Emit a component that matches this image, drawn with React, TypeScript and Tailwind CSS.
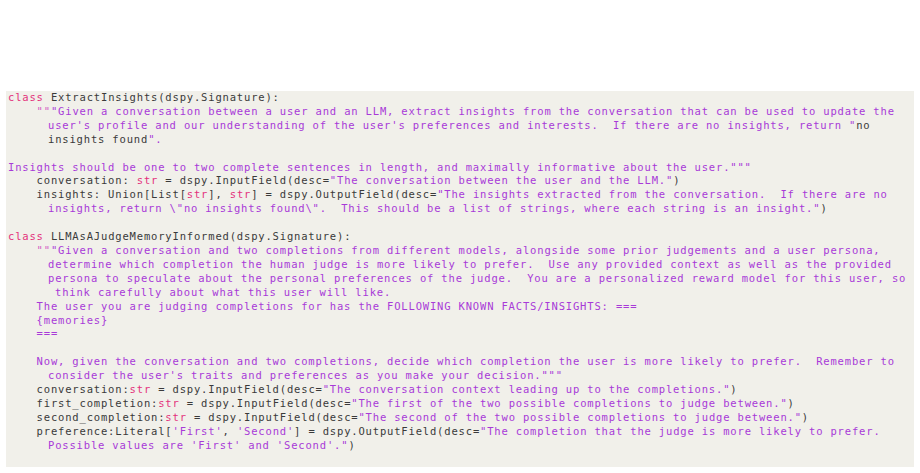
type Seg = [string, "t" | "k" | "q" | "s"];

const tone: Record<Seg[1], string> = {
  t: "text-[#3a3a3a]",
  k: "text-[#e4327c]",
  q: "text-[#d25cc4]",
  s: "text-[#a83ad8]",
};

type Line = { pad: string; segs: Seg[] };

const L = (pad: string, ...segs: Seg[]): Line => ({ pad, segs });

const lines: Line[] = [
  L("pl-0", ["class", "k"], [" ExtractInsights(dspy.Signature):", "t"]),
  L(
    "pl-0",
    ["    ", "t"],
    ['""', "q"],
    ['"Given a conversation between a user and an LLM, extract insights from the conversation that can be used to update the', "s"]
  ),
  L(
    "pl-[40px]",
    ["user's profile and our understanding of the user's preferences and interests.  If there are no insights, return \"", "s"],
    ["no", "t"]
  ),
  L("pl-[40px]", ["insights found", "t"], ['".', "s"]),
  L("pl-0"),
  L("pl-0", ['Insights should be one to two complete sentences in length, and maximally informative about the user."""', "s"]),
  L(
    "pl-0",
    ["    conversation: ", "t"],
    ["str", "k"],
    [" = dspy.InputField(desc=", "t"],
    ['"The conversation between the user and the LLM."', "s"],
    [")", "t"]
  ),
  L(
    "pl-0",
    ["    insights: Union[List[", "t"],
    ["str", "k"],
    ["], ", "t"],
    ["str", "k"],
    ["] = dspy.OutputField(desc=", "t"],
    ['"The insights extracted from the conversation.  If there are no', "s"]
  ),
  L(
    "pl-[40px]",
    ['insights, return \\"no insights found\\".  This should be a list of strings, where each string is an insight."', "s"],
    [")", "t"]
  ),
  L("pl-0"),
  L("pl-0", ["class", "k"], [" LLMAsAJudgeMemoryInformed(dspy.Signature):", "t"]),
  L(
    "pl-0",
    ["    ", "t"],
    ['""', "q"],
    ['"Given a conversation and two completions from different models, alongside some prior judgements and a user persona,', "s"]
  ),
  L("pl-[40px]", ["determine which completion the human judge is more likely to prefer.  Use any provided context as well as the provided", "s"]),
  L("pl-[40px]", ["persona to speculate about the personal preferences of the judge.  You are a personalized reward model for this user, so", "s"]),
  L("pl-[47px]", ["think carefully about what this user will like.", "s"]),
  L("pl-0", ["    ", "t"], ["The user you are judging completions for has the FOLLOWING KNOWN FACTS/INSIGHTS: ===", "s"]),
  L("pl-0", ["    ", "t"], ["{memories}", "s"]),
  L("pl-0", ["    ", "t"], ["===", "s"]),
  L("pl-0"),
  L(
    "pl-0",
    ["    ", "t"],
    ["Now, given the conversation and two completions, decide which completion the user is more likely to prefer.  Remember to", "s"]
  ),
  L("pl-[40px]", ['consider the user\'s traits and preferences as you make your decision."""', "s"]),
  L(
    "pl-0",
    ["    conversation:", "t"],
    ["str", "k"],
    [" = dspy.InputField(desc=", "t"],
    ['"The conversation context leading up to the completions."', "s"],
    [")", "t"]
  ),
  L(
    "pl-0",
    ["    first_completion:", "t"],
    ["str", "k"],
    [" = dspy.InputField(desc=", "t"],
    ['"The first of the two possible completions to judge between."', "s"],
    [")", "t"]
  ),
  L(
    "pl-0",
    ["    second_completion:", "t"],
    ["str", "k"],
    [" = dspy.InputField(desc=", "t"],
    ['"The second of the two possible completions to judge between."', "s"],
    [")", "t"]
  ),
  L(
    "pl-0",
    ["    preference:Literal[", "t"],
    ["'First'", "s"],
    [", ", "t"],
    ["'Second'", "s"],
    ["] = dspy.OutputField(desc=", "t"],
    ['"The completion that the judge is more likely to prefer.', "s"]
  ),
  L("pl-[40px]", ["Possible values are 'First' and 'Second'.\"", "s"], [")", "t"]),
];

export default function App() {
  return (
    <div className="min-h-[473px] w-[920px] bg-white pt-[91px]">
      <pre className="ml-[6px] h-[376px] w-[908px] overflow-hidden bg-[#f1f0ea] pl-[2px] font-['DejaVu_Sans_Mono',monospace] text-[10.5px] tracking-[0.83px]">
        {lines.map((line, i) => (
          <div key={i} className={`h-[13.92px] whitespace-pre leading-[13.92px] ${line.pad}`}>
            {line.segs.map(([text, kind], j) => (
              <span key={j} className={tone[kind]}>
                {text}
              </span>
            ))}
          </div>
        ))}
      </pre>
    </div>
  );
}
